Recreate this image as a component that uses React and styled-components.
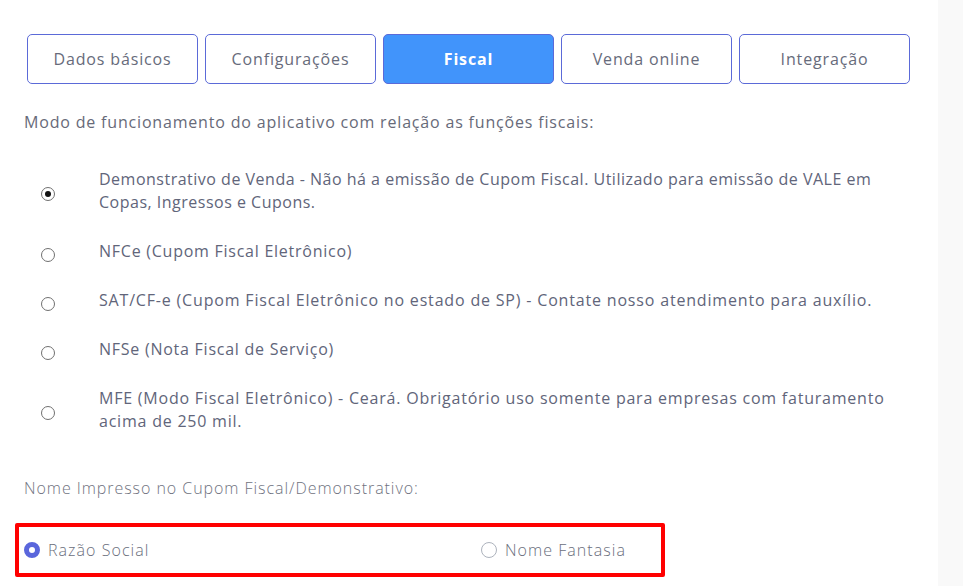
import React from "react";
import styled, { createGlobalStyle } from "styled-components";

const Global = createGlobalStyle`
  html, body { margin: 0; padding: 0; background: #ffffff; }
  body { font-family: "Open Sans", "Noto Sans", sans-serif; }
`;

const Page = styled.div`
  display: flex;
  width: 963px;
  height: 586px;
  overflow: hidden;
`;

const Main = styled.div`
  width: 938px;
  flex: none;
  padding: 34px 0 0 24px;
  box-sizing: border-box;
  background: #ffffff;
`;

const Side = styled.div`
  flex: 1;
  background: #f9f9f9;
`;

const Tabs = styled.div`
  display: flex;
  gap: 7px;
  margin-left: 3px;
`;

const Tab = styled.button`
  width: 171px;
  height: 50px;
  box-sizing: border-box;
  border: 1px solid #5b6ad8;
  border-radius: 5px;
  background: ${(p) => (p.$active ? "#4194fb" : "#ffffff")};
  color: ${(p) => (p.$active ? "#ffffff" : "#676b7b")};
  font-family: inherit;
  font-size: 16px;
  font-weight: ${(p) => (p.$active ? 700 : 400)};
  letter-spacing: 0.85px;
  cursor: pointer;
  padding: 0;
`;

const Intro = styled.p`
  margin: 27px 0 0 0;
  font-size: 16px;
  line-height: 23px;
  color: #676a79;
  letter-spacing: 0.82px;
`;

const OptionList = styled.div`
  display: flex;
  flex-direction: column;
  gap: 26px;
  margin-top: 34px;
`;

const Option = styled.label`
  display: flex;
  align-items: center;
`;

const RadioCell = styled.span`
  width: 75px;
  flex: none;
  display: flex;
  justify-content: flex-start;
  padding-left: 17px;
  box-sizing: border-box;
  margin-top: 6px;
`;

const NativeRadio = styled.span`
  width: 14px;
  height: 14px;
  box-sizing: border-box;
  border-radius: 50%;
  border: 1px solid #707070;
  display: flex;
  align-items: center;
  justify-content: center;
  &::after {
    content: "";
    width: 6px;
    height: 6px;
    border-radius: 50%;
    background: ${(p) => (p.$checked ? "#111111" : "transparent")};
  }
`;

const OptionText = styled.span`
  font-size: 16px;
  line-height: 23px;
  color: #61657a;
  letter-spacing: ${(p) => p.$spacing}px;
`;

const SubTitle = styled.p`
  margin: 44px 0 0 0;
  font-size: 16px;
  line-height: 23px;
  color: #6f7280;
  font-weight: 300;
  letter-spacing: 0.95px;
`;

const Highlight = styled.div`
  margin: 23px 0 0 -9px;
  width: 650px;
  height: 54px;
  box-sizing: border-box;
  border: 4px solid #ff0000;
  border-radius: 2px;
  display: grid;
  grid-template-columns: 457px auto;
  align-items: center;
  padding-left: 5px;
`;

const Choice = styled.label`
  display: flex;
  align-items: center;
  gap: 8px;
  font-size: 16px;
  color: #6a6e7c;
  font-weight: 300;
  letter-spacing: 1.05px;
`;

const CustomRadio = styled.span`
  width: 16px;
  height: 16px;
  box-sizing: border-box;
  border-radius: 50%;
  background: #ffffff;
  border: ${(p) => (p.$checked ? "5px solid #5a66dc" : "1px solid #adb3bd")};
`;

const options = [
  {
    spacing: 0.5,
    lines: [
      "Demonstrativo de Venda - Não há a emissão de Cupom Fiscal. Utilizado para emissão de VALE em",
      "Copas, Ingressos e Cupons.",
    ],
  },
  { spacing: 0.75, lines: ["NFCe (Cupom Fiscal Eletrônico)"] },
  {
    spacing: 0.82,
    lines: [
      "SAT/CF-e (Cupom Fiscal Eletrônico no estado de SP) - Contate nosso atendimento para auxílio.",
    ],
  },
  { spacing: 0.75, lines: ["NFSe (Nota Fiscal de Serviço)"] },
  {
    spacing: 0.78,
    lines: [
      "MFE (Modo Fiscal Eletrônico) - Ceará. Obrigatório uso somente para empresas com faturamento",
      "acima de 250 mil.",
    ],
  },
];

const tabs = ["Dados básicos", "Configurações", "Fiscal", "Venda online", "Integração"];

export default function App() {
  return (
    <>
      <Global />
      <Page>
        <Main>
          <Tabs>
            {tabs.map((t) => (
              <Tab key={t} $active={t === "Fiscal"}>
                {t}
              </Tab>
            ))}
          </Tabs>
          <Intro>Modo de funcionamento do aplicativo com relação as funções fiscais:</Intro>
          <OptionList>
            {options.map((o, i) => (
              <Option key={i}>
                <RadioCell>
                  <NativeRadio $checked={i === 0} />
                </RadioCell>
                <OptionText $spacing={o.spacing}>
                  {o.lines.map((l, j) => (
                    <React.Fragment key={j}>
                      {j > 0 && <br />}
                      {l}
                    </React.Fragment>
                  ))}
                </OptionText>
              </Option>
            ))}
          </OptionList>
          <SubTitle>Nome Impresso no Cupom Fiscal/Demonstrativo:</SubTitle>
          <Highlight>
            <Choice>
              <CustomRadio $checked />
              Razão Social
            </Choice>
            <Choice>
              <CustomRadio />
              Nome Fantasia
            </Choice>
          </Highlight>
        </Main>
        <Side />
      </Page>
    </>
  );
}
